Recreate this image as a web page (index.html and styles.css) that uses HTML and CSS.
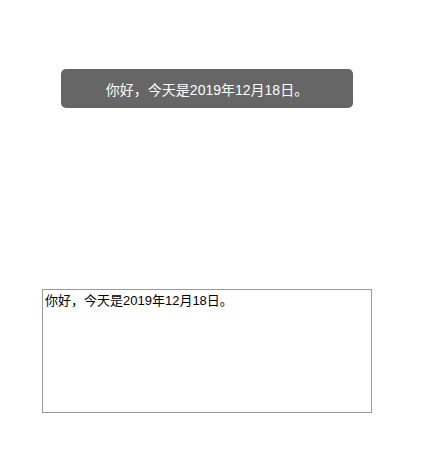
FILE: index.html
```html
<!DOCTYPE html>
<html lang="zh-CN">
<head>
<meta charset="utf-8">
<title>Toast</title>
<link rel="stylesheet" href="styles.css">
</head>
<body>
<div class="page">
  <textarea class="editor">你好，今天是2019年12月18日。</textarea>
</div>
<div class="toast">你好，今天是2019年12月18日。</div>
</body>
</html>
```

FILE: styles.css
```css
html, body {
  margin: 0;
  padding: 0;
  background: #fff;
}
body {
  font-family: "Liberation Sans", "Noto Sans CJK SC", sans-serif;
  width: 424px;
  height: 463px;
  position: relative;
  overflow: hidden;
}
.page {
  padding-top: 289px;
  padding-left: 42px;
}
.editor {
  display: block;
  box-sizing: border-box;
  width: 330px;
  height: 124px;
  margin: 0;
  padding: 2px 2px 1px;
  border: 1px solid #999;
  border-radius: 0;
  font-family: "Liberation Sans", "Noto Sans CJK SC", sans-serif;
  font-size: 13px;
  line-height: 18px;
  color: #000;
  resize: none;
  outline: none;
  background: #fff;
}
.toast {
  position: absolute;
  top: 69px;
  left: 61px;
  width: 292px;
  height: 39px;
  box-sizing: border-box;
  background: #666;
  border-radius: 5px;
  color: #fff;
  font-size: 14px;
  display: flex;
  align-items: center;
  justify-content: center;
}
```
